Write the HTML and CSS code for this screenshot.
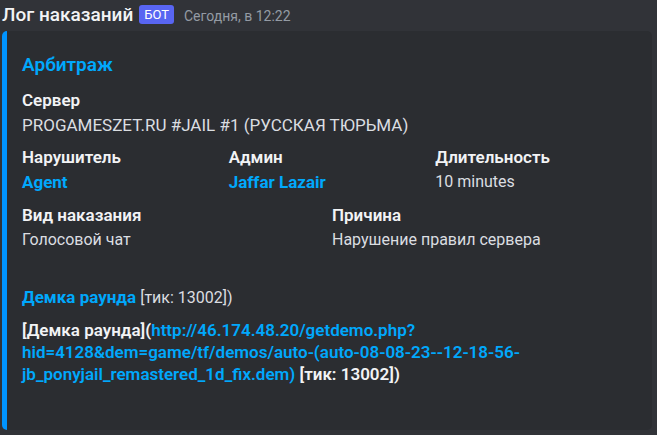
FILE: index.html
```html
<!DOCTYPE html>
<html lang="ru">
<head>
<meta charset="utf-8">
<title>Лог наказаний</title>
<link rel="stylesheet" href="styles.css">
</head>
<body>
<article class="message">
  <header class="message-header">
    <h1 class="author">Лог наказаний</h1>
    <span class="bot-tag">БОТ</span>
    <time class="timestamp">Сегодня, в 12:22</time>
  </header>
  <section class="embed">
    <h2 class="embed-title">Арбитраж</h2>
    <dl class="fields">
      <div class="field field-full">
        <dt>Сервер</dt>
        <dd>PROGAMESZET.RU #JAIL #1 (РУССКАЯ ТЮРЬМА)</dd>
      </div>
      <div class="field field-third">
        <dt>Нарушитель</dt>
        <dd><a class="strong-link" href="#agent">Agent</a></dd>
      </div>
      <div class="field field-third">
        <dt>Админ</dt>
        <dd><a class="strong-link" href="#admin">Jaffar Lazair</a></dd>
      </div>
      <div class="field field-third">
        <dt>Длительность</dt>
        <dd>10 minutes</dd>
      </div>
      <div class="field field-half">
        <dt>Вид наказания</dt>
        <dd>Голосовой чат</dd>
      </div>
      <div class="field field-half">
        <dt>Причина</dt>
        <dd>Нарушение правил сервера</dd>
      </div>
    </dl>
    <p class="demo"><a class="strong-link" href="#demo">Демка раунда</a> [тик: 13002])</p>
    <p class="demo-raw">[Демка раунда](<a href="#demo-file">http://46.174.48.20/getdemo.php?<br>hid=4128&amp;dem=game/tf/demos/auto-(auto-08-08-23--12-18-56-<br>jb_ponyjail_remastered_1d_fix.dem)</a> [тик: 13002])</p>
  </section>
</article>
</body>
</html>
```
FILE: styles.css
```css
* {
  box-sizing: border-box;
}

body {
  margin: 0;
  background: #313338;
  color: #dbdee1;
  font: 400 16px/22px Roboto, "Noto Sans", sans-serif;
}

h1, h2, p, dl, dd {
  margin: 0;
}

a {
  color: #00a8fc;
  text-decoration: none;
}

a:hover {
  text-decoration: underline;
}

.message {
  padding: 3px 5px 4px 2px;
}

.message-header {
  display: flex;
  align-items: center;
  height: 22px;
}

.author {
  padding-top: 2px;
  color: #f2f3f5;
  font-size: 19px;
  font-weight: 500;
}

.bot-tag {
  margin: 0 10px 0 6px;
  padding: 0 5px;
  border-radius: 3px;
  background: #5865f2;
  color: #fff;
  font-size: 13px;
  font-weight: 400;
  line-height: 19px;
}

.timestamp {
  padding-top: 3px;
  color: #949ba4;
  font-size: 14px;
}

.embed {
  margin-top: 6px;
  padding: 23px 10px 45px 15px;
  border-left: 5px solid #0094ff;
  border-radius: 5px;
  background: #2b2d31;
}

.embed-title {
  color: #00a8fc;
  font-size: 19px;
  font-weight: 600;
}

.fields {
  display: grid;
  grid-template-columns: repeat(6, 1fr);
  row-gap: 10px;
  margin-top: 13px;
}

.field-full {
  grid-column: span 6;
}

.field-full dd {
  font-size: 17px;
}

.field-third {
  grid-column: span 2;
}

.field-half {
  grid-column: span 3;
}

.field dt {
  margin-bottom: 3px;
  color: #f2f3f5;
  font-size: 17px;
  font-weight: 600;
}

.strong-link {
  font-size: 17px;
  font-weight: 700;
}

.demo {
  margin-top: 35px;
}

.demo-raw {
  margin-top: 10px;
  color: #f2f3f5;
  font-size: 17px;
  font-weight: 600;
}
```
